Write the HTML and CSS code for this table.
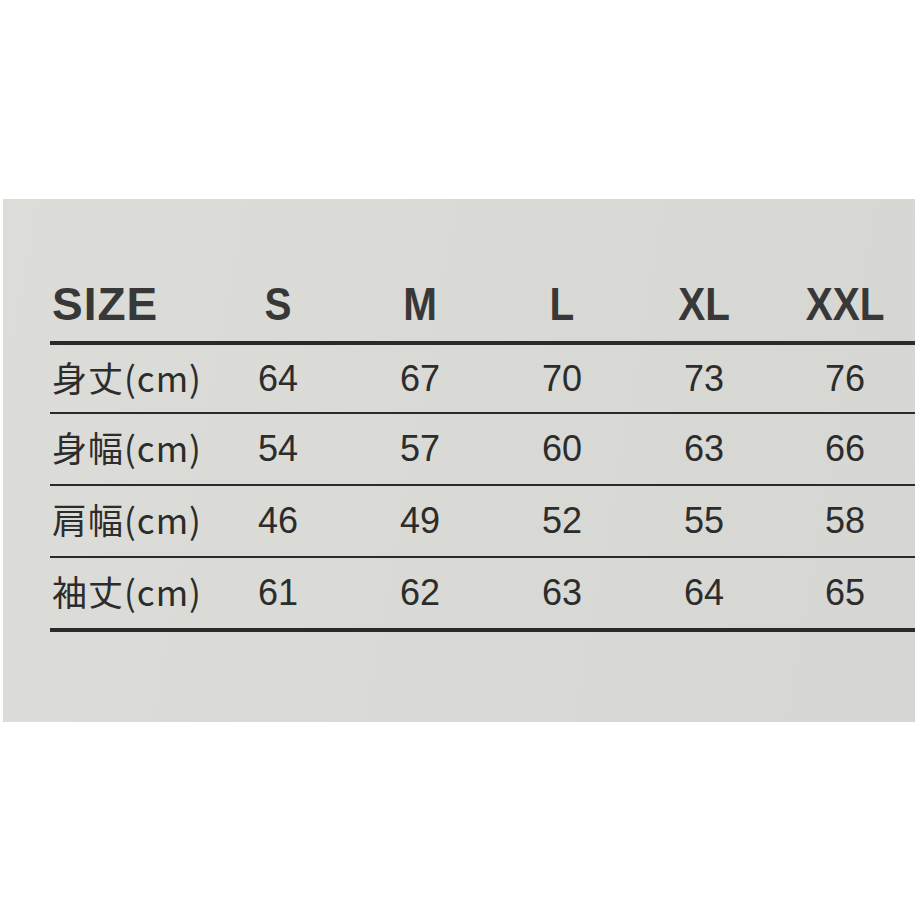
FILE: index.html
```html
<!DOCTYPE html>
<html lang="ja">
<head>
<meta charset="utf-8">
<title>SIZE</title>
<link rel="stylesheet" href="styles.css">
</head>
<body>
<div class="panel">
  <div class="table">
    <div class="row head">
      <div class="cell label">SIZE</div>
      <div class="cell">S</div>
      <div class="cell">M</div>
      <div class="cell">L</div>
      <div class="cell">XL</div>
      <div class="cell">XXL</div>
    </div>
    <div class="row data first">
      <div class="cell label">身丈(cm)</div>
      <div class="cell">64</div>
      <div class="cell">67</div>
      <div class="cell">70</div>
      <div class="cell">73</div>
      <div class="cell">76</div>
    </div>
    <div class="row data">
      <div class="cell label">身幅(cm)</div>
      <div class="cell">54</div>
      <div class="cell">57</div>
      <div class="cell">60</div>
      <div class="cell">63</div>
      <div class="cell">66</div>
    </div>
    <div class="row data">
      <div class="cell label">肩幅(cm)</div>
      <div class="cell">46</div>
      <div class="cell">49</div>
      <div class="cell">52</div>
      <div class="cell">55</div>
      <div class="cell">58</div>
    </div>
    <div class="row data last">
      <div class="cell label">袖丈(cm)</div>
      <div class="cell">61</div>
      <div class="cell">62</div>
      <div class="cell">63</div>
      <div class="cell">64</div>
      <div class="cell">65</div>
    </div>
  </div>
</div>
</body>
</html>
```
FILE: styles.css
```css
html, body {
  margin: 0;
  padding: 0;
  background: #ffffff;
}

body {
  width: 920px;
  height: 920px;
  overflow: hidden;
}

.panel {
  margin: 199px 0 0 3px;
  width: 912px;
  height: 523px;
  box-sizing: border-box;
  padding: 82px 0 0 47px;
  background: linear-gradient(100deg, #dcdcd9 0%, #d9d9d6 50%, #d6d6d3 100%);
}

.table {
  display: flex;
  flex-direction: column;
}

.row {
  display: grid;
  grid-template-columns: 157px repeat(4, 142px) 1fr;
  align-items: center;
  border-bottom: 2px solid #2a2a2a;
}

.cell {
  text-align: center;
  white-space: nowrap;
}

.cell.label {
  text-align: left;
  padding-left: 2px;
}

.head {
  font-family: "Liberation Sans", Arial, sans-serif;
  font-weight: bold;
  font-size: 46px;
  line-height: 46px;
  color: #383838;
  padding-bottom: 14px;
  border-bottom-width: 4px;
}

.head .cell {
  transform: scaleX(0.88);
}

.head .cell.label {
  transform: none;
  letter-spacing: 1px;
}

.data {
  height: 72px;
  box-sizing: border-box;
  font-family: "Liberation Sans", "Noto Sans CJK JP", sans-serif;
  font-size: 36px;
  line-height: 36px;
  color: #2c2c2c;
}

.data .cell.label {
  font-family: "Noto Sans CJK JP", sans-serif;
  font-size: 35px;
  line-height: 36px;
  letter-spacing: 1px;
  margin-top: -4px;
}

.data.first {
  height: 69px;
}

.data.last {
  border-bottom-width: 4px;
  height: 74px;
}
```
